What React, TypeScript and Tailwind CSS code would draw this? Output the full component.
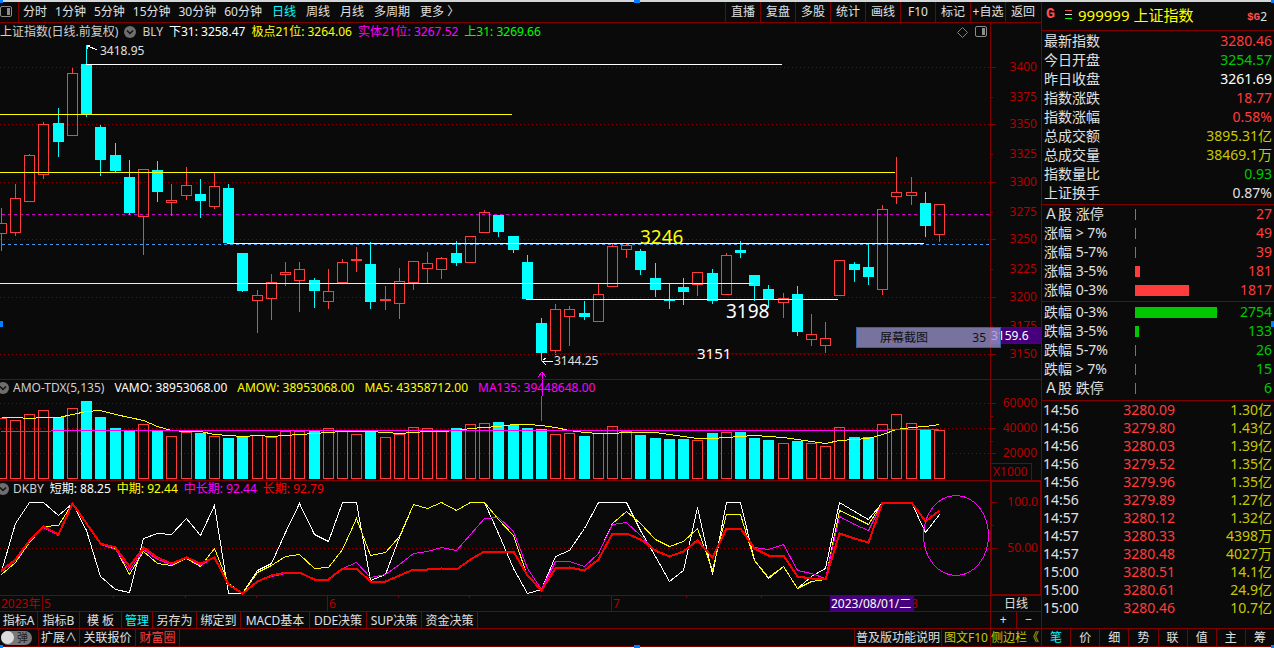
import { ReactNode } from "react";
import clsx from "clsx";

// x, direction, high, top of body, bottom of body, low, volume top
type Bar = [number, "up" | "down", number, number, number, number, number];

const bars: Bar[] = [
  [1, "up", 208, 223, 234, 251, 418],
  [15, "up", 184, 198, 233, 236, 420],
  [29, "up", 154, 155, 202, 202, 414],
  [43, "up", 122, 124, 175, 179, 410],
  [58, "down", 108, 123, 142, 157, 417],
  [72, "up", 68, 73, 136, 136, 408],
  [86, "down", 45, 64, 115, 117, 401],
  [100, "down", 125, 127, 160, 176, 417],
  [115, "down", 143, 155, 171, 172, 428],
  [129, "down", 160, 177, 213, 215, 431],
  [143, "up", 169, 169, 217, 255, 424],
  [157, "down", 161, 170, 192, 202, 431],
  [171, "up", 184, 200, 203, 216, 436],
  [186, "up", 167, 185, 196, 200, 432],
  [200, "down", 179, 194, 201, 218, 433],
  [214, "up", 172, 186, 207, 209, 436],
  [228, "down", 184, 188, 243, 243, 438],
  [242, "down", 253, 253, 291, 292, 436],
  [257, "up", 290, 295, 301, 333, 435],
  [271, "up", 274, 282, 299, 320, 437],
  [285, "up", 262, 272, 275, 286, 431],
  [299, "up", 262, 269, 281, 312, 431],
  [314, "down", 278, 280, 291, 308, 431],
  [328, "up", 269, 291, 302, 309, 428],
  [342, "up", 259, 262, 283, 283, 431],
  [356, "up", 247, 259, 261, 272, 434],
  [370, "down", 242, 264, 302, 309, 432],
  [385, "up", 286, 299, 301, 310, 437],
  [399, "up", 268, 281, 304, 319, 434],
  [413, "up", 261, 261, 283, 290, 427],
  [427, "up", 252, 263, 269, 283, 428],
  [441, "up", 257, 258, 270, 279, 431],
  [456, "down", 241, 253, 263, 266, 428],
  [470, "up", 236, 236, 263, 263, 424],
  [484, "up", 210, 212, 233, 233, 423],
  [498, "down", 215, 215, 232, 237, 422],
  [513, "down", 236, 236, 250, 253, 425],
  [527, "down", 255, 262, 299, 299, 428],
  [541, "down", 318, 323, 353, 361, 429],
  [555, "up", 304, 309, 351, 355, 434],
  [569, "up", 306, 309, 317, 346, 433],
  [584, "down", 301, 313, 317, 320, 436],
  [598, "up", 283, 294, 322, 322, 433],
  [612, "up", 244, 246, 287, 287, 426],
  [626, "up", 243, 245, 250, 258, 431],
  [640, "down", 249, 251, 270, 275, 435],
  [655, "down", 263, 278, 290, 297, 438],
  [669, "down", 284, 299, 301, 309, 439],
  [683, "down", 278, 287, 292, 305, 439],
  [697, "up", 272, 272, 285, 296, 440],
  [712, "down", 269, 273, 301, 304, 433],
  [726, "up", 253, 255, 295, 295, 432],
  [740, "down", 241, 250, 253, 258, 432],
  [754, "down", 275, 275, 286, 301, 438],
  [768, "down", 285, 289, 299, 308, 440],
  [783, "up", 293, 298, 303, 318, 443],
  [797, "down", 286, 294, 332, 336, 441],
  [811, "up", 314, 334, 340, 346, 443],
  [825, "up", 322, 338, 346, 353, 446],
  [839, "up", 260, 260, 296, 296, 427],
  [854, "down", 262, 264, 270, 282, 437],
  [868, "down", 244, 267, 277, 285, 437],
  [882, "up", 205, 209, 290, 295, 424],
  [896, "up", 157, 192, 197, 204, 414],
  [911, "up", 177, 192, 196, 205, 423],
  [925, "down", 192, 203, 226, 237, 429],
  [939, "up", 204, 204, 235, 242, 430],
];

const volumeMa5 = [
  417, 417, 418, 417, 417, 414, 411, 410, 414, 417, 420, 426, 430, 431, 431, 434, 435, 436, 435,
  436, 435, 434, 433, 432, 431, 431, 431, 432, 433, 432, 431, 431, 430, 428, 427, 426, 424, 424,
  425, 427, 430, 432, 433, 433, 432, 432, 432, 434, 436, 438, 438, 437, 436, 435, 436, 437, 439,
  441, 443, 440, 439, 438, 434, 429, 427, 426, 424,
];

const shortTerm = [
  571, 523, 502, 502, 515, 503, 530, 576, 589, 592, 538, 533, 534, 518, 535, 505, 593, 593, 570,
  563, 532, 503, 534, 541, 502, 502, 580, 574, 537, 504, 508, 502, 510, 502, 502, 533, 568, 593,
  589, 556, 550, 528, 502, 502, 502, 530, 556, 581, 570, 507, 574, 502, 502, 560, 578, 566, 588,
  576, 568, 502, 511, 519, 502, 502, 502, 532, 514,
];

const midTerm = [
  574, 562, 542, 526, 525, 503, 522, 543, 548, 574, 551, 563, 565, 558, 566, 548, 583, 593, 572,
  565, 556, 554, 568, 567, 549, 518, 555, 552, 536, 504, 508, 502, 510, 502, 502, 519, 535, 576,
  589, 561, 561, 566, 553, 523, 511, 523, 539, 546, 541, 528, 570, 514, 514, 560, 577, 566, 588,
  581, 579, 510, 517, 524, 502, 502, 502, 521, 510,
];

const midLongTerm = [
  571, 560, 541, 527, 535, 503, 523, 544, 549, 570, 549, 559, 564, 557, 565, 557, 584, 593, 581,
  576, 573, 572, 579, 579, 568, 562, 577, 574, 564, 553, 551, 547, 550, 534, 518, 517, 531, 568,
  589, 561, 561, 566, 553, 524, 522, 535, 551, 556, 551, 539, 557, 528, 528, 547, 549, 544, 570,
  573, 578, 516, 524, 530, 502, 502, 502, 521, 510,
];

const longTerm = [
  570, 559, 540, 526, 534, 503, 523, 543, 547, 566, 547, 557, 563, 557, 563, 557, 584, 593, 581,
  575, 572, 572, 579, 579, 568, 568, 581, 581, 575, 569, 569, 568, 569, 559, 551, 551, 551, 575,
  590, 568, 567, 570, 559, 533, 533, 539, 550, 556, 551, 540, 557, 528, 528, 548, 555, 555, 576,
  578, 579, 533, 538, 542, 502, 502, 502, 521, 510,
];

const minutePeriods = ["分时", "1分钟", "5分钟", "15分钟", "30分钟", "60分钟"];
const dayPeriods = ["日线", "周线", "月线", "多周期", "更多 〉"];
const tools = ["直播", "复盘", "多股", "统计", "画线", "F10", "标记", "+自选", "返回"];

const templates = [
  { label: "指标A", width: "w-[38px]" },
  { label: "指标B", width: "w-[42px]" },
  { label: "模 板", width: "w-[42px]" },
  { label: "管理", width: "w-[31px]", active: true },
  { label: "另存为", width: "w-[44px]" },
  { label: "绑定到", width: "w-[44px]" },
  { label: "MACD基本", width: "w-[69px]" },
  { label: "DDE决策", width: "w-[57px]" },
  { label: "SUP决策", width: "w-[55px]" },
  { label: "资金决策", width: "w-[56px]" },
];

const quotes = [
  { label: "最新指数", value: "3280.46", color: "text-[#ff3c3c]" },
  { label: "今日开盘", value: "3254.57", color: "text-[#00c800]" },
  { label: "昨日收盘", value: "3261.69", color: "text-white" },
  { label: "指数涨跌", value: "18.77", color: "text-[#ff3c3c]" },
  { label: "指数涨幅", value: "0.58%", color: "text-[#ff3c3c]" },
  { label: "总成交额", value: "3895.31亿", color: "text-[#c8c800]" },
  { label: "总成交量", value: "38469.1万", color: "text-[#c8c800]" },
  { label: "指数量比", value: "0.93", color: "text-[#00c800]" },
  { label: "上证换手", value: "0.87%", color: "text-[#e0e0e0]" },
];

const risers = [
  { label: "Ａ股 涨停", count: 27 },
  { label: "涨幅 > 7%", count: 49 },
  { label: "涨幅 5-7%", count: 39 },
  { label: "涨幅 3-5%", count: 181 },
  { label: "涨幅 0-3%", count: 1817 },
];

const fallers = [
  { label: "跌幅 0-3%", count: 2754 },
  { label: "跌幅 3-5%", count: 133 },
  { label: "跌幅 5-7%", count: 26 },
  { label: "跌幅 > 7%", count: 15 },
  { label: "Ａ股 跌停", count: 6 },
];

const ticks = [
  ["14:56", "3280.09", "1.30亿"],
  ["14:56", "3279.80", "1.43亿"],
  ["14:56", "3280.03", "1.39亿"],
  ["14:56", "3279.52", "1.35亿"],
  ["14:56", "3279.96", "1.35亿"],
  ["14:56", "3279.89", "1.27亿"],
  ["14:57", "3280.12", "1.32亿"],
  ["14:57", "3280.33", "4398万"],
  ["14:57", "3280.48", "4027万"],
  ["15:00", "3280.51", "14.1亿"],
  ["15:00", "3280.61", "24.9亿"],
  ["15:00", "3280.46", "10.7亿"],
];

const sideTabs = ["笔", "价", "细", "势", "联", "值", "主", "筹"];

const priceAxis: [number, string][] = [
  [67, "3400"],
  [97, "3375"],
  [124, "3350"],
  [154, "3325"],
  [182, "3300"],
  [212, "3275"],
  [239, "3250"],
  [269, "3225"],
  [297, "3200"],
  [326, "3175"],
  [354, "3150"],
];

const toPoints = (ys: number[]) => ys.map((y, i) => `${bars[i][0] + 0.5},${y + 0.5}`).join(" ");

function PanelIcon() {
  return (
    <svg width="13" height="12" viewBox="0 0 13 12" aria-hidden="true">
      <rect x="0.5" y="0.5" width="11" height="10" rx="1.5" fill="none" stroke="#8c8c8c" />
      <rect x="7" y="2" width="3" height="7" fill="#8c8c8c" />
    </svg>
  );
}

function Chevron() {
  return (
    <svg width="12" height="12" viewBox="0 0 12 12" className="shrink-0" aria-hidden="true">
      <circle cx="6" cy="6" r="6" fill="#6e6e6e" />
      <path d="M3 4.5 6 7.5 9 4.5" fill="none" stroke="#111" strokeWidth="1.5" />
    </svg>
  );
}

function Plot({ top, height, className, children }: { top: number; height: number; className: string; children: ReactNode }) {
  return (
    <svg
      viewBox={`0 ${top} 990 ${height}`}
      preserveAspectRatio="none"
      shapeRendering="crispEdges"
      fill="none"
      className={clsx("[grid-area:1/1] block w-full", className)}
    >
      {children}
    </svg>
  );
}

function GridLines({ ys }: { ys: number[] }) {
  return (
    <>
      {ys.map((y) => (
        <line key={y} x1="0" x2="990" y1={y + 0.5} y2={y + 0.5} stroke="#900000" strokeDasharray="1 3" />
      ))}
    </>
  );
}

function Axis({ top, height, labels, minor = [] }: { top: number; height: number; labels: [number, string][]; minor?: number[] }) {
  return (
    <svg width="50" height={height} viewBox={`0 ${top} 50 ${height}`} className="block text-[12px]">
      {labels.map(([y, label], i) => (
        <g key={label}>
          <line
            x1="0"
            x2={minor.length === 0 && i % 2 ? 2 : 5}
            y1={y + 0.5}
            y2={y + 0.5}
            stroke="#800000"
          />
          <text x="46" y={y + 4} textAnchor="end" fill="#b40000">
            {label}
          </text>
        </g>
      ))}
      {minor.map((y) => (
        <line key={y} x1="0" x2="2" y1={y + 0.5} y2={y + 0.5} stroke="#800000" />
      ))}
    </svg>
  );
}

function Note({ x, className, children }: { x: number; className: string; children: ReactNode }) {
  return (
    <span className={clsx("absolute leading-none", className)} style={{ left: `${(x / 990) * 100}%` }}>
      {children}
    </span>
  );
}

function PricePanel() {
  return (
    <section className="grid grid-cols-[minmax(0,1fr)_50px] border-b border-[#800000]">
      <div className="relative grid border-r border-[#800000]">
        <Plot top={23} height={356} className="h-[356px]">
          <GridLines ys={[67, 124, 182, 239, 297, 354]} />
          <line x1="2" x2="990" y1="214.5" y2="214.5" stroke="#c800c8" strokeDasharray="3 3" />
          <line x1="2" x2="990" y1="244.5" y2="244.5" stroke="#4696e6" strokeDasharray="3 3" />
          {bars.map(([x, dir, high, top, bottom, low]) => (
            <g key={x} stroke={dir === "up" ? "#ff3c3c" : "#00ffff"}>
              {high < top && <line x1={x + 0.5} x2={x + 0.5} y1={high} y2={top} />}
              {low > bottom && <line x1={x + 0.5} x2={x + 0.5} y1={bottom} y2={low} />}
              <rect
                x={x - 4.5}
                y={top + 0.5}
                width="10"
                height={bottom - top - 1}
                fill={dir === "up" ? "none" : "#00ffff"}
              />
            </g>
          ))}
          <g stroke="#fff">
            <line x1="86" x2="782" y1="64.5" y2="64.5" />
            <line x1="227" x2="924" y1="243.5" y2="243.5" />
            <line x1="526" x2="838" y1="299.5" y2="299.5" />
            <path d="M87 45.5h3M87.5 45v4M88 46l9 4M542 361.5h11M543 360l3-2M543 362l3 3" />
          </g>
          <g stroke="#ffff00">
            <line x1="0" x2="512" y1="114.5" y2="114.5" />
            <line x1="0" x2="895" y1="172.5" y2="172.5" />
            <line x1="0" x2="754" y1="283.5" y2="283.5" stroke="#ffff50" />
          </g>
          <line x1="554" x2="824" y1="353.5" y2="353.5" stroke="#0000d2" />
          <path d="M542.5 379v-7M538 377l4-5 4 5" stroke="#ff00ff" />
        </Plot>
        <header className="[grid-area:1/1] flex h-[18px] items-center justify-between self-start whitespace-nowrap pr-[2px]">
          <div className="flex items-center gap-1.5">
            <h1 className="text-[#d0d0d0]">上证指数(日线.前复权)</h1>
            <Chevron />
            <span className="text-[#d0d0d0]">BLY</span>
            <span className="text-white">下31: 3258.47</span>
            <span className="text-[#ffff00]">极点21位: 3264.06</span>
            <span className="text-[#ff00ff]">实体21位: 3267.52</span>
            <span className="text-[#00ff00]">上31: 3269.66</span>
          </div>
          <div className="flex items-center gap-[7px]">
            <svg width="11" height="11" viewBox="0 0 11 11" aria-hidden="true">
              <path d="M5.500.5 10.500 5.500 5.500 10.500.5 5.500z" fill="none" stroke="#808080" />
            </svg>
            <PanelIcon />
          </div>
        </header>
        <Note x={100} className="top-[22px] text-[12px] text-[#e0e0e0]">3418.95</Note>
        <Note x={640} className="top-[205px] text-[19px] text-[#ffff00]">3246</Note>
        <Note x={726} className="top-[279px] text-[19px] text-white">3198</Note>
        <Note x={697} className="top-[323px] text-[15px] text-white">3151</Note>
        <Note x={554} className="top-[332px] text-[12px] text-[#e0e0e0]">3144.25</Note>
        <div className="absolute -right-[11px] top-[304px] z-10 flex h-[21px] w-[145px] items-center justify-between border border-[#3264aa] bg-[#9691c8]/78 pl-[23px] pr-[14px] text-[#101010]">
          <span>屏幕截图</span>
          <span>35</span>
        </div>
      </div>
      <div className="relative">
        <Axis top={23} height={356} labels={priceAxis} />
        <span className="absolute left-0 top-[304px] flex h-[17px] w-full items-center border-y border-[#800000] bg-[#46007d] text-white">
          3159.6
        </span>
      </div>
    </section>
  );
}

function VolumePanel() {
  return (
    <section className="grid grid-cols-[minmax(0,1fr)_50px] border-b border-[#800000]">
      <div className="grid border-r border-[#800000]">
        <header className="[grid-area:1/1] flex h-4 items-center gap-2.5 self-start overflow-hidden whitespace-nowrap">
          <div className="-ml-[3px] flex items-center gap-1">
            <Chevron />
            <h2 className="text-[#d0d0d0]">AMO-TDX(5,135)</h2>
          </div>
          <span className="text-white">VAMO: 38953068.00</span>
          <span className="text-[#ffff00]">AMOW: 38953068.00</span>
          <span className="text-[#ffff00]">MA5: 43358712.00</span>
          <span className="text-[#ff00ff]">MA135: 39448648.00</span>
        </header>
        <Plot top={380} height={100} className="h-[100px]">
          <GridLines ys={[403, 428, 453]} />
          {bars.map(([x, dir, , , , , top]) => (
            <rect
              key={x}
              x={x - 4.5}
              y={top + 0.5}
              width="10"
              height={478 - top}
              stroke={dir === "up" ? "#ff3c3c" : "#00ffff"}
              fill={dir === "up" ? "none" : "#00ffff"}
            />
          ))}
          <polyline points={toPoints(volumeMa5)} stroke="#ffff00" />
          <path d="M1 431.500H51M51 430.500H888M888 429.500H939" stroke="#ff00ff" />
          <path d="M542.500 380V396M541.500 396V421" stroke="#ff00ff" />
        </Plot>
      </div>
      <div className="flex flex-col">
        <Axis
          top={380}
          height={83}
          minor={[416, 441]}
          labels={[
            [403, "60000"],
            [428, "40000"],
            [453, "20000"],
          ]}
        />
        <span className="mr-[9px] flex h-[17px] items-center border-r border-t border-[#800000] pl-0.5 text-[#b40000]">
          X1000
        </span>
      </div>
    </section>
  );
}

function TrendPanel() {
  return (
    <section className="grid grid-cols-[minmax(0,1fr)_50px] border-b border-[#800000]">
      <div className="grid border-r border-[#800000]">
        <Plot top={481} height={114} className="h-[114px]">
          <GridLines ys={[548]} />
          <polyline points={toPoints(shortTerm)} stroke="#fff" />
          <polyline points={toPoints(midTerm)} stroke="#ffff00" />
          <polyline points={toPoints(midLongTerm)} stroke="#ff00ff" />
          <polyline points={toPoints(longTerm)} stroke="#ff0000" strokeWidth="2" />
          <ellipse cx="956" cy="535.5" rx="32.5" ry="40" stroke="#ff00ff" />
        </Plot>
        <header className="[grid-area:1/1] flex h-4 items-center gap-1.5 self-start whitespace-nowrap">
          <div className="-ml-[3px] flex items-center gap-1">
            <Chevron />
            <h2 className="text-[#d0d0d0]">DKBY</h2>
          </div>
          <span className="text-white">短期: 88.25</span>
          <span className="text-[#ffff00]">中期: 92.44</span>
          <span className="text-[#ff00ff]">中长期: 92.44</span>
          <span className="text-[#ff0000]">长期: 92.79</span>
        </header>
      </div>
      <div className="border border-[#800000]">
        <Axis
          top={482}
          height={112}
          minor={[525]}
          labels={[
            [502, "100.0"],
            [548, "50.00"],
          ]}
        />
      </div>
    </section>
  );
}

function DateAxis() {
  return (
    <div className="grid h-4 grid-cols-[minmax(0,1fr)_50px] border-b border-[#800000]">
      <div className="relative grid border-r border-[#800000] text-[#b40000]">
        <Plot top={596} height={15} className="h-[15px]">
          <path
            d="M42.500 596v15M327.500 596v15M611.500 596v15M113.500 596v2M185.500 596v2M256.500 596v2M398.500 596v2M469.500 596v2M540.500 596v2M686.500 596v2M761.500 596v2"
            stroke="#800000"
          />
        </Plot>
        <Note x={1} className="top-[2px]">2023年</Note>
        <Note x={44} className="top-[2px]">5</Note>
        <Note x={329} className="top-[2px]">6</Note>
        <Note x={613} className="top-[2px]">7</Note>
        <Note x={911} className="top-[2px]">8</Note>
        <Note x={830} className="top-0 flex h-[15px] w-[84px] items-center overflow-hidden whitespace-nowrap bg-[#46007d] pl-px text-white">
          2023/08/01/二
        </Note>
      </div>
      <span className="flex items-center justify-center text-[#e0e0e0]">日线</span>
    </div>
  );
}

function DistributionTable({ rows, rising }: { rows: typeof risers; rising?: boolean }) {
  return (
    <table className="w-full table-fixed leading-[17px]">
      <tbody>
        {rows.map((row) => (
          <tr key={row.label} className="h-[19px]">
            <th className="w-[93px] whitespace-nowrap pl-0.5 text-left align-top font-normal">{row.label}</th>
            <td>
              <div
                className={clsx("h-[11px]", rising ? "bg-[#ff3c3c]" : "bg-[#00c800]")}
                style={{ width: Math.max(1, Math.round(row.count / 33.5)) }}
              />
            </td>
            <td className={clsx("w-12 pr-0.5 text-right align-top", rising ? "text-[#ff3c3c]" : "text-[#00c800]")}>
              {row.count}
            </td>
          </tr>
        ))}
      </tbody>
    </table>
  );
}

function Sidebar() {
  return (
    <aside className="flex w-[233px] shrink-0 flex-col border-l border-[#800000] text-[14px] leading-[18px] text-[#e0e0e0]">
      <header className="flex h-[29px] items-center border-b border-[#800000] pb-0.5 pl-1 pr-[7px]">
        <span className="font-['Liberation_Mono'] text-[15px] font-bold text-[#ff5050]">G</span>
        <svg width="8" height="10" viewBox="0 0 8 10" className="ml-2.5" shapeRendering="crispEdges" aria-hidden="true">
          <rect width="7" height="1" y="0" fill="#ff5050" />
          <rect width="7" height="1" y="4" fill="#e0e0e0" />
          <rect width="7" height="1" y="8" fill="#00ff00" />
        </svg>
        <h2 className="ml-[5px] whitespace-nowrap text-[15px] text-[#ffff00]">999999 上证指数</h2>
        <span className="ml-auto pt-1 font-['Liberation_Mono'] text-[11px] font-bold text-[#ff5050]">$G</span>
        <span className="pt-1 text-[12px]">2</span>
      </header>
      <table className="mb-px w-full">
        <tbody>
          {quotes.map((quote) => (
            <tr key={quote.label} className="h-[19px]">
              <th className="pl-0.5 text-left font-normal">{quote.label}</th>
              <td className={clsx("pr-0.5 text-right", quote.color)}>{quote.value}</td>
            </tr>
          ))}
        </tbody>
      </table>
      <div className="mt-px border-y border-[#800000] pb-px">
        <DistributionTable rows={risers} rising />
      </div>
      <div className="border-b border-[#800000] pb-0.5 pt-px">
        <DistributionTable rows={fallers} />
      </div>
      <table className="w-full table-fixed">
        <tbody>
          {ticks.map(([time, price, amount], i) => (
            <tr key={i} className="h-[18px]">
              <td className="w-[45px] pl-px">{time}</td>
              <td className="w-[88px] text-right text-[#ff3c3c]">{price}</td>
              <td className="pr-0.5 text-right text-[#c8c800]">{amount}</td>
            </tr>
          ))}
        </tbody>
      </table>
      <nav className="mt-auto flex h-[19px] divide-x divide-[#800000] border-y border-[#800000] text-[12px] leading-none">
        {sideTabs.map((tab, i) => (
          <button key={tab} className={clsx("flex-1", i === 0 && "text-[#00ffff]")}>
            {tab}
          </button>
        ))}
      </nav>
    </aside>
  );
}

function Toolbar() {
  return (
    <nav className="flex h-[21px] items-stretch justify-between whitespace-nowrap border-b border-[#800000] text-[#e0e0e0]">
      <div className="flex items-stretch">
        <button aria-label="侧栏" className="w-[19px] border-r border-[#800000]">
          <PanelIcon />
        </button>
        <div className="ml-1 flex gap-2">
          {minutePeriods.map((period) => (
            <button key={period}>{period}</button>
          ))}
        </div>
        <div className="ml-2.5 flex gap-2.5">
          {dayPeriods.map((period, i) => (
            <button key={period} className={clsx(i === 0 && "text-[#00ffff]")}>
              {period}
            </button>
          ))}
        </div>
      </div>
      <div className="flex items-stretch pr-px">
        {tools.map((tool) => (
          <button key={tool} className="w-[35px] border-l border-[#800000]">
            {tool}
          </button>
        ))}
      </div>
    </nav>
  );
}

function BottomBars() {
  return (
    <footer className="whitespace-nowrap text-[#e0e0e0]">
      <div className="flex h-[17px] justify-between border-b border-[#800000]">
        <div className="flex">
          {templates.map((item) => (
            <button
              key={item.label}
              className={clsx("border-r border-[#800000] pt-px", item.width, item.active && "text-[#00ffff]")}
            >
              {item.label}
            </button>
          ))}
        </div>
        <div className="flex w-[51px] divide-x divide-[#800000] border-l border-[#800000]">
          <button className="flex-1" aria-label="放大">+</button>
          <button className="flex-1" aria-label="缩小">−</button>
        </div>
      </div>
      <div className="flex h-[18px] justify-between border-b border-[#800000]">
        <div className="flex">
          <div className="flex w-[39px] items-center border-r border-[#800000] pl-px">
            <button role="switch" aria-checked="false" className="flex h-[14px] w-[31px] items-center justify-between rounded-full bg-[#787878] pr-1 text-[11px] text-[#202020]">
              <span className="size-[13px] rounded-full bg-[#dcdcdc]" />弹
            </button>
          </div>
          <button className="w-[41px] border-r border-[#800000]">扩展∧</button>
          <button className="w-14 border-r border-[#800000]">关联报价</button>
          <button className="w-11 border-r border-[#800000] text-[#ff3c3c]">财富圈</button>
        </div>
        <div className="flex text-[#c8c800]">
          <a href="#help" className="flex w-[88px] items-center justify-center border-x border-[#800000] text-[#e0e0e0]">
            普及版功能说明
          </a>
          <button className="w-[49px] border-r border-[#800000]">图文F10</button>
          <button className="w-[50px] overflow-hidden text-left">侧边栏《</button>
        </div>
      </div>
    </footer>
  );
}

const handles = [
  "left-0 top-0",
  "left-1/2 top-0 -translate-x-1/2",
  "right-0 top-0",
  "left-0 top-1/2 -translate-y-1/2",
  "right-0 top-1/2 -translate-y-1/2",
  "left-0 bottom-0",
  "left-1/2 bottom-0 -translate-x-1/2",
  "right-0 bottom-0",
];

export default function App() {
  return (
    <main className="relative flex border-b border-t-2 border-b-white border-t-[#d2d6d6] bg-[#0a0a0a] font-['Noto_Sans','Noto_Sans_CJK_SC',sans-serif] text-[12px] leading-none">
      <div className="min-w-0 flex-1">
        <Toolbar />
        <PricePanel />
        <VolumePanel />
        <TrendPanel />
        <DateAxis />
        <BottomBars />
      </div>
      <Sidebar />
      <div className="pointer-events-none absolute inset-x-0 -bottom-px -top-0.5">
        {handles.map((position) => (
          <span
            key={position}
            className={clsx(
              "absolute bg-[#0080ff]",
              position,
              position.includes("left-1/2") ? "h-[3px] w-1.5" : position.includes("top-1/2") ? "h-1.5 w-[3px]" : "size-[3px]"
            )}
          />
        ))}
      </div>
    </main>
  );
}
